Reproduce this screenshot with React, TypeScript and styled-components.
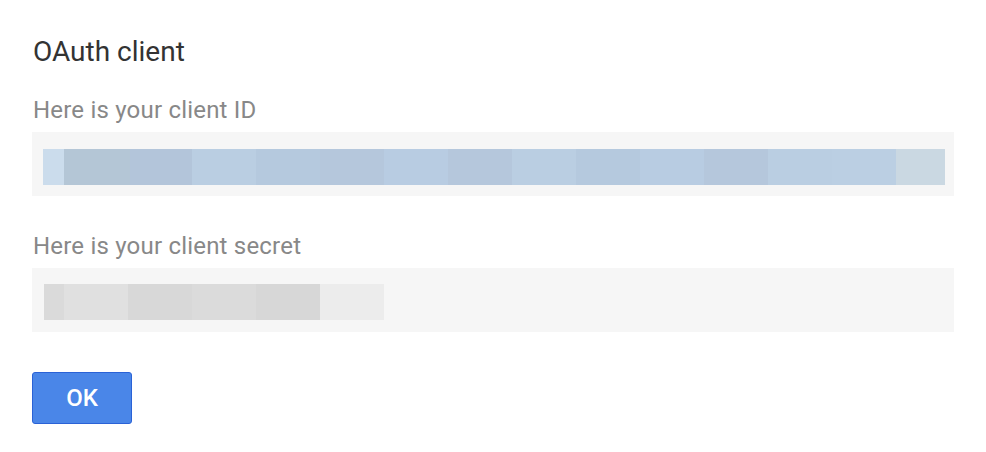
import React from "react";
import styled, { createGlobalStyle } from "styled-components";

const Global = createGlobalStyle`
  html, body { margin: 0; padding: 0; background: #ffffff; }
  body { font-family: Roboto, "Liberation Sans", Arial, sans-serif; }
`;

const Dialog = styled.div`
  width: 986px;
  height: 452px;
  box-sizing: border-box;
  padding: 36px 32px 0 32px;
  display: flex;
  flex-direction: column;
  background: #fff;
`;

const Title = styled.h1`
  margin: 0;
  font-size: 28px;
  font-weight: 400;
  line-height: 32px;
  color: #333333;
  padding-left: 1px;
`;

const Label = styled.div<{ $top: number }>`
  margin-top: ${(p) => p.$top}px;
  font-size: 24px;
  line-height: 28px;
  letter-spacing: 0.2px;
  color: #888888;
  padding-left: 1px;
`;

const Field = styled.div<{ $top: number; $inset: number }>`
  margin-top: ${(p) => p.$top}px;
  width: 922px;
  height: 64px;
  box-sizing: border-box;
  background: #f6f6f6;
  display: flex;
  align-items: flex-start;
  padding-left: 11px;
  padding-top: ${(p) => p.$inset}px;
`;

const Redacted = styled.div<{ $shift?: number }>`
  display: flex;
  height: 36px;
  margin-left: ${(p) => p.$shift ?? 0}px;
`;

const Chunk = styled.div<{ $w: number; $c: string }>`
  width: ${(p) => p.$w}px;
  height: 100%;
  background: ${(p) => p.$c};
`;

const OkButton = styled.button`
  margin-top: 40px;
  width: 100px;
  height: 52px;
  box-sizing: border-box;
  border: 1px solid #2a62d6;
  border-radius: 3px;
  background: #4a86e8;
  color: #ffffff;
  font-family: Roboto, "Liberation Sans", Arial, sans-serif;
  font-size: 24px;
  font-weight: 500;
  cursor: pointer;
  align-self: flex-start;
  padding: 0;
`;

const idChunks: [number, string][] = [
  [21, "#cbdcec"],
  [66, "#b4c6d6"],
  [62, "#b3c5da"],
  [64, "#bacee2"],
  [64, "#b5c9de"],
  [64, "#b5c7dc"],
  [64, "#b8cce2"],
  [64, "#b5c7dc"],
  [64, "#bacee2"],
  [64, "#b5c9de"],
  [64, "#b8cce2"],
  [64, "#b5c7dc"],
  [64, "#bacee2"],
  [64, "#bbcfe3"],
  [49, "#cad8e2"],
];

const secretChunks: [number, string][] = [
  [20, "#dadada"],
  [64, "#e0e0e0"],
  [64, "#d8d8d8"],
  [64, "#dbdbdb"],
  [64, "#d7d7d7"],
  [64, "#ececec"],
];

export default function App() {
  return (
    <>
      <Global />
      <Dialog>
        <Title>OAuth client</Title>
        <Label $top={28}>Here is your client ID</Label>
        <Field $top={8} $inset={17}>
          <Redacted>
            {idChunks.map(([w, c], i) => (
              <Chunk key={i} $w={w} $c={c} />
            ))}
          </Redacted>
        </Field>
        <Label $top={36}>Here is your client secret</Label>
        <Field $top={8} $inset={16}>
          <Redacted $shift={1}>
            {secretChunks.map(([w, c], i) => (
              <Chunk key={i} $w={w} $c={c} />
            ))}
          </Redacted>
        </Field>
        <OkButton>OK</OkButton>
      </Dialog>
    </>
  );
}
